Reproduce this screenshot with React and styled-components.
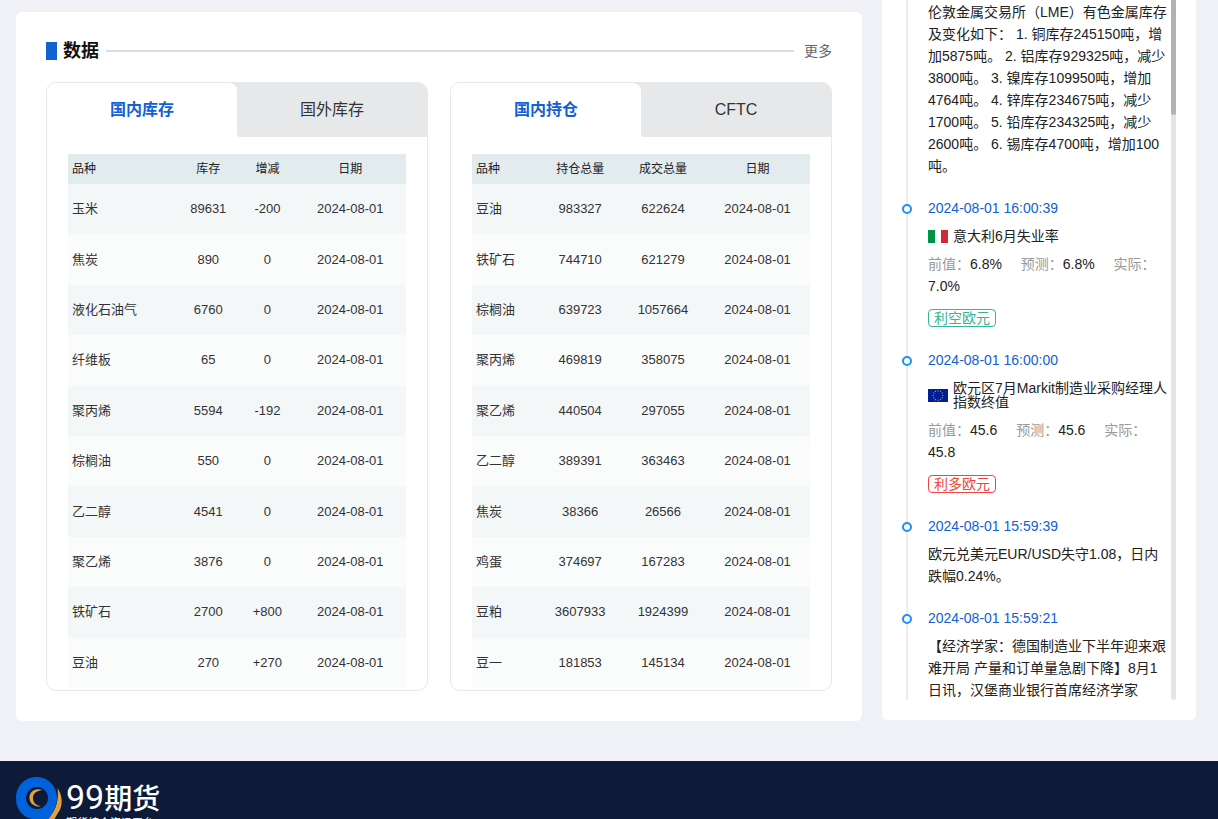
import React from "react";
import styled, { createGlobalStyle, css } from "styled-components";

const Global = createGlobalStyle`
  * { box-sizing: border-box; }
  body {
    margin: 0;
    background: #f0f1f6;
    color: #333;
    font: 14px/22px "Liberation Sans", "Noto Sans CJK SC", sans-serif;
  }
`;

const Main = styled.main`
  display: flex;
  align-items: flex-start;
  gap: 20px;
  padding: 0 22px 40px 16px;
`;

const DataCard = styled.section`
  flex: 1;
  min-width: 0;
  margin-top: 12px;
  padding: 28px 30px 30px;
  background: #fff;
  border-radius: 6px;
`;

const Heading = styled.header`
  display: flex;
  align-items: center;
  margin-bottom: 20px;
`;

const Marker = styled.span`
  width: 11px;
  height: 18px;
  margin-right: 6px;
  background: #1160d4;
`;

const Title = styled.h2`
  margin: 0;
  font-size: 18px;
  line-height: 22px;
  color: #111;
`;

const Rule = styled.span`
  flex: 1;
  height: 2px;
  margin: 0 10px 0 7px;
  background: #d6dfe7;
`;

const MoreLink = styled.a`
  color: #666;
  text-decoration: none;
`;

const Panels = styled.div`
  display: grid;
  grid-template-columns: 1fr 1fr;
  gap: 22px;
`;

const Panel = styled.div`
  overflow: hidden;
  border: 1px solid #e7e8ea;
  border-radius: 10px;
`;

const Tabs = styled.div`
  display: flex;
  background: linear-gradient(#e7e8ea, #e7e8ea) no-repeat right top / 55% 20px;
`;

const Tab = styled.button`
  flex: 1;
  height: 54px;
  padding: 0;
  border: 0;
  font: 16px/22px "Liberation Sans", "Noto Sans CJK SC", sans-serif;
  color: #333;
  background: #e7e8ea;
  border-radius: 0 0 0 3px;
  ${(p) =>
    p.$active &&
    css`
      color: #1160d4;
      font-weight: bold;
      background: #fff;
      border-radius: 0 8px 0 0;
    `}
`;

const Table = styled.table`
  width: calc(100% - 42px);
  height: 534px;
  margin: 17px 21px 2px;
  border-collapse: collapse;
  table-layout: fixed;
  font-size: 13px;
  line-height: 20px;

  th, td { padding: 0; text-align: center; }
  th:first-child, td:first-child { padding-left: 4px; text-align: left; }
  th {
    height: 30px;
    font-size: 12px;
    font-weight: normal;
    color: #222;
    background: #e2ebee;
  }
  tbody tr:nth-child(odd) { background: #f3f7f8; }
  tbody tr:nth-child(even) { background: #fafcfb; }
`;

const NewsCard = styled.aside`
  width: 314px;
  padding: 0 20px 20px;
  background: #fff;
  border-radius: 0 0 6px 6px;
`;

const NewsScroll = styled.div`
  display: flex;
  height: 700px;
  overflow: hidden;
`;

const Timeline = styled.ol`
  flex: 1;
  min-width: 0;
  margin: 0 3px 0 4px;
  padding: 1px 0 0 20px;
  list-style: none;
  border-left: 2px solid #ebebeb;
`;

const Item = styled.li`
  position: relative;
  padding-bottom: 20px;
`;

const Dot = styled.span`
  position: absolute;
  top: 7px;
  left: -26px;
  width: 10px;
  height: 10px;
  border: 2px solid #1890ff;
  border-radius: 50%;
  background: #fff;
`;

const Time = styled.time`
  display: block;
  color: #1160d4;
`;

const Body = styled.p`
  margin: ${(p) => (p.$first ? 0 : "6px")} 0 0;
  color: #222;
`;

const Event = styled.div`
  display: flex;
  align-items: center;
  gap: 5px;
  margin: 10px 0;
  line-height: 14px;
  color: #222;
  svg { flex: none; }
`;

const Stats = styled.div`
  color: #999;
  b { font-weight: normal; color: #222; margin-right: 15px; }
`;

const Tag = styled.span`
  display: block;
  width: fit-content;
  margin: 12px 0 2px;
  padding: 0 5px;
  border: 1px solid;
  border-radius: 4px;
  line-height: 16px;
  color: ${(p) => p.$color};
`;

const Track = styled.div`
  width: 5px;
  background: #e5e5e5;
  border-radius: 0 0 3px 3px;
`;

const Thumb = styled.div`
  height: 115px;
  background: #b2b2b2;
  border-radius: 0 0 3px 3px;
`;

const Footer = styled.footer`
  display: flex;
  gap: 4px;
  height: 58px;
  padding: 16px 16px 0;
  overflow: hidden;
  color: #fff;
  background: #0d1a38;
`;

const Brand = styled.div`
  display: flex;
  flex-direction: column;
  padding-top: 1px;
  white-space: nowrap;
`;

const BrandName = styled.strong`
  display: flex;
  align-items: center;
  font: 500 28px/38px "Noto Sans CJK SC", sans-serif;
`;

const BrandNumber = styled.span`
  font: 400 34px/38px Roboto, sans-serif;
`;

const Slogan = styled.small`
  font: 11px/12px "Noto Sans CJK SC", sans-serif;
`;

const stock = [
  ["玉米", "89631", "-200"], ["焦炭", "890", "0"], ["液化石油气", "6760", "0"],
  ["纤维板", "65", "0"], ["聚丙烯", "5594", "-192"], ["棕榈油", "550", "0"],
  ["乙二醇", "4541", "0"], ["聚乙烯", "3876", "0"], ["铁矿石", "2700", "+800"],
  ["豆油", "270", "+270"],
];

const positions = [
  ["豆油", "983327", "622624"], ["铁矿石", "744710", "621279"], ["棕榈油", "639723", "1057664"],
  ["聚丙烯", "469819", "358075"], ["聚乙烯", "440504", "297055"], ["乙二醇", "389391", "363463"],
  ["焦炭", "38366", "26566"], ["鸡蛋", "374697", "167283"], ["豆粕", "3607933", "1924399"],
  ["豆一", "181853", "145134"],
];

function DataPanel({ tabs, columns, widths, rows }) {
  return (
    <Panel>
      <Tabs role="tablist">
        {tabs.map((t, i) => (
          <Tab key={t} role="tab" aria-selected={i === 0} $active={i === 0}>{t}</Tab>
        ))}
      </Tabs>
      <Table>
        <colgroup>{widths.map((w, i) => <col key={i} width={w} />)}</colgroup>
        <thead>
          <tr>{columns.map((c) => <th key={c} scope="col">{c}</th>)}</tr>
        </thead>
        <tbody>
          {rows.map((r) => (
            <tr key={r[0]}>
              {r.map((v, i) => <td key={i}>{v}</td>)}
              <td>2024-08-01</td>
            </tr>
          ))}
        </tbody>
      </Table>
    </Panel>
  );
}

const ItalyFlag = () => (
  <svg width="20" height="13" viewBox="0 0 20 13" aria-label="意大利">
    <path fill="#fff" d="M0 0h20v13H0z" />
    <path fill="#009246" d="M0 0h7v13H0z" />
    <path fill="#ce2b37" d="M13 0h7v13h-7z" />
  </svg>
);

const EuFlag = () => (
  <svg width="20" height="13" viewBox="0 0 20 13" aria-label="欧元区">
    <path fill="#001f96" d="M0 0h20v13H0z" />
    {Array.from({ length: 12 }, (_, i) => (
      <circle
        key={i}
        cx={10 + 4.8 * Math.cos((i * Math.PI) / 6)}
        cy={6.5 + 4.8 * Math.sin((i * Math.PI) / 6)}
        r="0.55"
        fill="#d8c840"
      />
    ))}
  </svg>
);

const LogoMark = () => (
  <svg width="46" height="60" viewBox="0 0 46 60" aria-hidden="true">
    <path fill="#e2a03f" d="M41.500 11C47 19 47 29 42 36C38 43 35 48 27 55L31 43C40 34 43 24 41.500 11Z" />
    <path fill="#0062dd" fillRule="evenodd" d="M20.500 0C32 0 41 9 41 21C41 32 34 42 19 57L27 42C9 45 0 34 0 21C0 9 9 0 20.500 0ZM21 10A11 11 0 1 0 21 32A11 11 0 1 0 21 10Z" />
    <path fill="#e2a03f" d="M27 13C18 10 12.500 16 13.500 22C14.500 28 20 30 25 29.500C19 28 17 25 17 21C17 17 20 13.500 27 13Z" />
  </svg>
);

function Release({ time, flag, name, prev, forecast, actual, tag, color }) {
  return (
    <Item>
      <Dot />
      <Time>{time}</Time>
      <Event>{flag}<span>{name}</span></Event>
      <Stats>
        前值：<b>{prev}</b> 预测：<b>{forecast}</b> 实际：<b>{actual}</b>
      </Stats>
      <Tag $color={color}>{tag}</Tag>
    </Item>
  );
}

export default function App() {
  return (
    <>
      <Global />
      <Main>
        <DataCard>
          <Heading>
            <Marker />
            <Title>数据</Title>
            <Rule />
            <MoreLink href="#more">更多</MoreLink>
          </Heading>
          <Panels>
            <DataPanel
              tabs={["国内库存", "国外库存"]}
              columns={["品种", "库存", "增减", "日期"]}
              widths={["32%", "19%", "16%", "33%"]}
              rows={stock}
            />
            <DataPanel
              tabs={["国内持仓", "CFTC"]}
              columns={["品种", "持仓总量", "成交总量", "日期"]}
              widths={["20%", "24%", "25%", "31%"]}
              rows={positions}
            />
          </Panels>
        </DataCard>
        <NewsCard>
          <NewsScroll>
            <Timeline>
              <Item>
                <Body $first>
                  伦敦金属交易所（LME）有色金属库存及变化如下： 1. 铜库存245150吨，增加5875吨。 2.
                  铝库存929325吨，减少3800吨。 3. 镍库存109950吨，增加4764吨。 4.
                  锌库存234675吨，减少1700吨。 5. 铅库存234325吨，减少2600吨。 6.
                  锡库存4700吨，增加100吨。
                </Body>
              </Item>
              <Release
                time="2024-08-01 16:00:39" flag={<ItalyFlag />} name="意大利6月失业率"
                prev="6.8%" forecast="6.8%" actual="7.0%" tag="利空欧元" color="#36b692"
              />
              <Release
                time="2024-08-01 16:00:00" flag={<EuFlag />} name="欧元区7月Markit制造业采购经理人指数终值"
                prev="45.6" forecast="45.6" actual="45.8" tag="利多欧元" color="#ee4540"
              />
              <Item>
                <Dot />
                <Time>2024-08-01 15:59:39</Time>
                <Body>欧元兑美元EUR/USD失守1.08，日内跌幅0.24%。</Body>
              </Item>
              <Item>
                <Dot />
                <Time>2024-08-01 15:59:21</Time>
                <Body>【经济学家：德国制造业下半年迎来艰难开局 产量和订单量急剧下降】8月1日讯，汉堡商业银行首席经济学家</Body>
              </Item>
            </Timeline>
            <Track><Thumb /></Track>
          </NewsScroll>
        </NewsCard>
      </Main>
      <Footer>
        <LogoMark />
        <Brand>
          <BrandName><BrandNumber>99</BrandNumber>期货</BrandName>
          <Slogan>期货综合资讯平台</Slogan>
        </Brand>
      </Footer>
    </>
  );
}
